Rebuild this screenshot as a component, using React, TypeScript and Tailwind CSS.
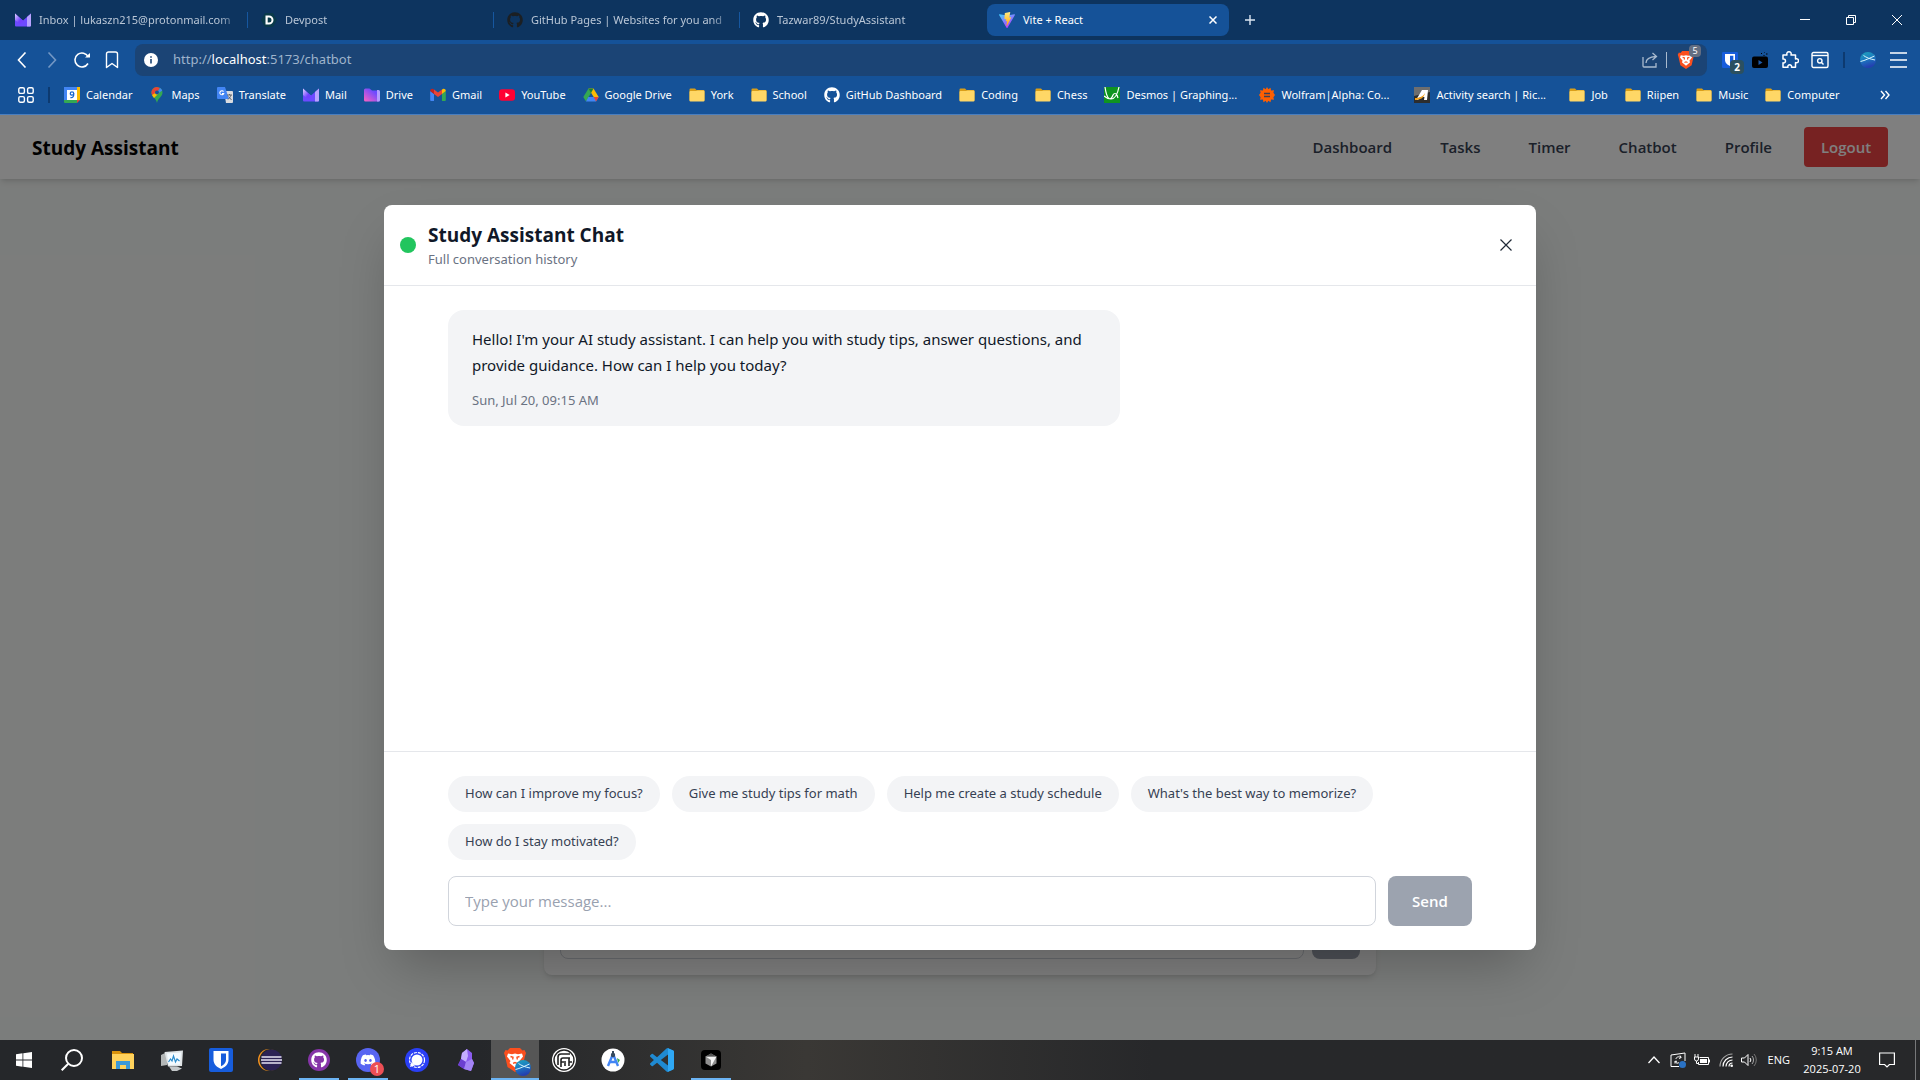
import React, { useState } from 'react';
import { FaGithub, FaDiscord } from 'react-icons/fa';

type IconProps = { className?: string };

/* ---------- icons ---------- */

const ProtonMailIcon: React.FC<IconProps> = ({ className = 'size-4' }) => (
  <svg viewBox="0 0 16 16" className={className}>
    <defs>
      <linearGradient id="pm" x1="0" y1="0" x2="1" y2="1">
        <stop offset="0" stopColor="#e3d9ff" />
        <stop offset="0.6" stopColor="#7341ff" />
      </linearGradient>
    </defs>
    <path d="M0 1.5 8 8.5 16 1.5V13.5a1 1 0 0 1-1 1H1a1 1 0 0 1-1-1Z" fill="#6d4aff" />
    <path d="M0 1.5 6 7 9 9.5 5 12 0 8Z" fill="url(#pm)" />
    <path d="M12 5 16 1.5V13.5a1 1 0 0 1-1 1h-3Z" fill="#b9a3ff" />
  </svg>
);

const DevpostIcon: React.FC<IconProps> = () => (
  <svg viewBox="0 0 16 16" className="size-4">
    <path d="M4 1h8l4 7-4 7H4L0 8Z" fill="#0a3a4a" />
    <path d="M4.500 3.500H8a4.500 4.500 0 0 1 0 9H4.500Zm2.200 2v5H8a2.500 2.500 0 0 0 0-5Z" fill="#fff" />
  </svg>
);

const ViteIcon: React.FC<IconProps> = () => (
  <svg viewBox="0 0 32 32" className="size-4">
    <defs>
      <linearGradient id="va" x1="0" y1="0" x2="0.6" y2="1">
        <stop offset="0" stopColor="#41d1ff" />
        <stop offset="1" stopColor="#bd34fe" />
      </linearGradient>
      <linearGradient id="vb" x1="0" y1="0" x2="0" y2="1">
        <stop offset="0" stopColor="#ffea83" />
        <stop offset="1" stopColor="#ffa800" />
      </linearGradient>
    </defs>
    <path d="m31.8 5.8-15 26a1 1 0 0 1-1.4 0L.2 5.800a1 1 0 0 1 1-1.300L16 7.100l14.800-2.600a1 1 0 0 1 1 1.300Z" fill="url(#va)" />
    <path d="M22 .1 12 2a.5.5 0 0 0-.4.4l-.7 11.600a.5.5 0 0 0 .6.500l3-.700-1 5.200 3-.8-1.600 9c-.1.600.700.900 1 .400L24.500 11a.5.500 0 0 0-.5-.7l-3.300.600L22.500.700A.5.500 0 0 0 22 .1Z" fill="url(#vb)" />
  </svg>
);

const CalendarIcon: React.FC<IconProps> = () => (
  <svg viewBox="0 0 16 16" className="size-4">
    <path d="M0 0h13v3H3v10H0Z" fill="#4285f4" />
    <path d="M13 0h3v13h-3Z" fill="#fbbc04" />
    <path d="M0 13h13v3H1a1 1 0 0 1-1-1Z" fill="#34a853" />
    <path d="M13 13h3l-3 3Z" fill="#ea4335" />
    <path d="M3 3h10v10H3Z" fill="#fff" />
    <circle cx="8" cy="6.500" r="1.700" fill="none" stroke="#1967d2" strokeWidth="1.300" />
    <path d="M9.700 6.500c.2 3-1 4.500-3.300 4" fill="none" stroke="#1967d2" strokeWidth="1.300" />
  </svg>
);

const MapsIcon: React.FC<IconProps> = () => (
  <svg viewBox="0 0 16 16" className="size-4">
    <path d="M8 0a5.500 5.500 0 0 0-5.500 5.500c0 4 4.500 5.500 5.500 10.500 1-5 5.500-6.500 5.500-10.500A5.500 5.500 0 0 0 8 0Z" fill="#34a853" />
    <path d="M8 0a5.500 5.500 0 0 0-4.300 2L8 5.500 11 1Z" fill="#ea4335" />
    <path d="M11 .9 8 5.500l-4.500 5 9.700-7A5.500 5.500 0 0 0 11 .9Z" fill="#4285f4" />
    <path d="M3.700 2a5.500 5.500 0 0 0-.6 6L8 5.500Z" fill="#ea4335" />
    <path d="M3 8c.5 1.200 1.200 2 2 3l5-5-2-1Z" fill="#fbbc04" />
    <circle cx="8" cy="5.500" r="2" fill="#155298" />
  </svg>
);

const TranslateIcon: React.FC<IconProps> = () => (
  <svg viewBox="0 0 16 16" className="size-4">
    <path d="M7 4h8a1 1 0 0 1 1 1v10a1 1 0 0 1-1 1H9Z" fill="#dadce0" />
    <path d="M1 0h7l4 12H1a1 1 0 0 1-1-1V1a1 1 0 0 1 1-1Z" fill="#4285f4" />
    <path d="M6.500 4.600A2 2 0 1 0 6.700 6.500H5" fill="none" stroke="#fff" strokeWidth="1.100" />
    <path d="M10 8h5M12.500 7v1M14 8c-.5 2-2 3.500-3 4.500M11.500 9.500l3 3.500" fill="none" stroke="#5f6368" strokeWidth="1" />
  </svg>
);

const ProtonDriveIcon: React.FC<IconProps> = () => (
  <svg viewBox="0 0 16 16" className="size-4">
    <defs>
      <linearGradient id="pd" x1="1" y1="0" x2="0" y2="1">
        <stop offset="0.3" stopColor="#6d4aff" />
        <stop offset="1" stopColor="#ff62c0" />
      </linearGradient>
    </defs>
    <path d="M0 3a1.500 1.500 0 0 1 1.500-1.500h4L8 3.500h6.500A1.500 1.500 0 0 1 16 5v8a1.500 1.500 0 0 1-1.500 1.500h-13A1.500 1.500 0 0 1 0 13Z" fill="url(#pd)" />
    <path d="M13 3h1.500A1.500 1.500 0 0 1 16 4.500V13a1.500 1.500 0 0 1-1.500 1.500H13Z" fill="#b39dff" />
  </svg>
);

const GmailIcon: React.FC<IconProps> = () => (
  <svg viewBox="0 0 16 16" className="size-4">
    <path d="M1 14h3V7L.2 4v9a1 1 0 0 0 .8 1Z" fill="#4285f4" />
    <path d="M12 14h3a1 1 0 0 0 .8-1V4L12 7Z" fill="#34a853" />
    <path d="M12 2.500V7l3.800-3c0-2-1.800-2.500-2.800-2Z" fill="#fbbc04" />
    <path d="M4 7V2.500l4 3 4-3V7l-4 3Z" fill="#ea4335" />
    <path d="M.2 4 4 7V2.500L3 2C2 1.500.2 2 .2 4Z" fill="#c5221f" />
  </svg>
);

const YouTubeIcon: React.FC<IconProps> = () => (
  <svg viewBox="0 0 16 16" className="size-4">
    <rect y="2.300" width="16" height="11.500" rx="3" fill="#ff0033" />
    <path d="m6.400 5.600 4.200 2.400-4.200 2.400Z" fill="#fff" />
  </svg>
);

const GoogleDriveIcon: React.FC<IconProps> = () => (
  <svg viewBox="0 0 16 16" className="size-4">
    <path d="M5.500 1.500 8 6 3 14.500.3 10Z" fill="#34a853" />
    <path d="M5.500 1.500h5L15.700 10h-5Z" fill="#fbbc04" />
    <path d="M5.500 1.500h5L8 6Z" fill="#188038" />
    <path d="M5.300 10h10.400L13 14.500H3Z" fill="#4285f4" />
    <path d="M10.700 10h5L13 14.500Z" fill="#ea4335" />
  </svg>
);

const FolderIcon: React.FC<IconProps> = () => (
  <svg viewBox="0 0 16 16" className="size-4">
    <path d="M.5 2.500a1 1 0 0 1 1-1H6l1.500 1.500h7a1 1 0 0 1 1 1v9.500H.5Z" fill="#d99e19" />
    <path d="M1.500 4H7l1.500-.5h6a1 1 0 0 1 1 1v9a1 1 0 0 1-1 1h-13a1 1 0 0 1-1-1V5a1 1 0 0 1 1-1Z" fill="#ffd766" />
  </svg>
);

const GithubWhiteIcon: React.FC<IconProps> = () => <FaGithub className="size-4 text-white" />;

const GithubDarkIcon: React.FC<IconProps> = () => <FaGithub className="size-4 text-[#1b1f23]" />;

const DesmosIcon: React.FC<IconProps> = () => (
  <svg viewBox="0 0 16 16" className="size-4">
    <path d="M0 0h16v16H0Z" fill="#0f9420" />
    <path d="M1 0c2 14 6 14 8 8 1-2 3-2 4 0l1 3M15 0c-2 10-5 12-8 12-3 0-5-1-7-3" fill="none" stroke="#fff" strokeWidth="1.200" />
  </svg>
);

const WolframIcon: React.FC<IconProps> = () => (
  <svg viewBox="0 0 16 16" className="size-4">
    <path d="m8 0 1.300 2.200L11.500.7l.6 2.700 2.900-.2-.6 2.600L16 8l-1.600 2.200.6 2.600-2.900-.2-.6 2.700-2.200-1.500L8 16l-1.300-2.200-2.200 1.500-.6-2.700-2.900.2.600-2.600L0 8l1.600-2.200L1 3.200l2.900.2.600-2.700 2.200 1.500Z" fill="#ff5f00" />
    <path d="M5 6.500h6M5 9.500h6" stroke="#3b3f54" strokeWidth="1.400" />
  </svg>
);

const ActivityIcon: React.FC<IconProps> = () => (
  <svg viewBox="0 0 16 16" className="size-4">
    <path d="M0 0h16v16H0Z" fill="#2d2d2d" />
    <path d="M0 0h16v5L0 9Z" fill="#6e6e6e" />
    <path d="M2 13 8 3h6l-1 10h-3l.5-3H6l-2 3Z" fill="#fff" />
    <path d="M1 11c4 0 8-1 10-5-1 5-5 7-10 7Z" fill="#f5a21b" />
  </svg>
);

const BitwardenIcon: React.FC<IconProps> = ({ className = 'size-4' }) => (
  <svg viewBox="0 0 24 24" className={className}>
    <rect width="24" height="24" rx="2" fill="#175ddc" />
    <path d="M4.500 3h15v9c0 4.500-4 7.500-7.500 9-3.500-1.500-7.500-4.500-7.500-9Z" fill="#fff" />
    <path d="M12 5.500h5V12c0 3-2.500 5-5 6.300Z" fill="#175ddc" />
  </svg>
);

const BraveIcon: React.FC<IconProps> = ({ className = 'size-[18px]' }) => (
  <svg viewBox="0 0 24 24" className={className}>
    <path d="M7 0h10l2.500 2.500 2-.5L23 5l-1 3-2.500 11L12 24l-7.500-5L2 8 1 5l1.500-3 2 .5Z" fill="#fb4f1e" />
    <path d="m5 5.500 4 .8 3-.8 3 .8 4-.8 1 3-3.500 4.500 1 2L12 19.500 6.500 15l1-2L4 8.500Z" fill="#fff" />
    <path d="m7.500 8.500 2.500.8-.3 2.200M16.500 8.500l-2.500.8.3 2.200M10 15.300l2-.8 2 .8" fill="none" stroke="#fb4f1e" strokeWidth="1.400" />
  </svg>
);

const GlobeIcon: React.FC<IconProps> = ({ className = 'size-4' }) => (
  <svg viewBox="0 0 16 16" className={className}>
    <defs>
      <linearGradient id="gl" x1="0" y1="0" x2="0.3" y2="1">
        <stop offset="0" stopColor="#1fa5bd" />
        <stop offset="0.5" stopColor="#1c7cc0" />
        <stop offset="1" stopColor="#2340b0" />
      </linearGradient>
    </defs>
    <circle cx="8" cy="8" r="8" fill="url(#gl)" />
    <path d="M.5 9.500C5 8.500 10 6 14.500 4M3.500 3.500c3 2 6 3.500 11.500 4.500" fill="none" stroke="#d5f4ff" strokeWidth="1" />
  </svg>
);

/* ---------- browser chrome ---------- */

interface Tab {
  title: string;
  icon: React.FC<IconProps>;
}

const tabs: Tab[] = [
  { title: 'Inbox | lukaszn215@protonmail.com', icon: ProtonMailIcon },
  { title: 'Devpost', icon: DevpostIcon },
  { title: 'GitHub Pages | Websites for you and', icon: GithubDarkIcon },
  { title: 'Tazwar89/StudyAssistant', icon: GithubWhiteIcon },
];

const TabStrip: React.FC = () => (
  <div className="flex h-10 shrink-0 items-center bg-[#0d345f] pl-[3px] font-['Noto_Sans',sans-serif] text-[11px] text-[#b9c6d6]">
    {tabs.map((tab, i) => (
      <React.Fragment key={tab.title}>
        <button className="flex h-8 w-[242px] items-center gap-2 pl-3 text-left">
          <tab.icon />
          <span className="flex-1 whitespace-nowrap [mask-image:linear-gradient(to_right,black_180px,transparent_202px)]">
            {tab.title}
          </span>
        </button>
        <span className={`ml-0.5 mr-px h-4 w-px ${i < tabs.length - 1 ? 'bg-[#1657a0]' : ''}`} />
      </React.Fragment>
    ))}
    <div className="flex h-8 w-[242px] items-center gap-2 rounded-lg bg-[#155298] pl-3 pr-3 text-white">
      <ViteIcon />
      <span className="flex-1">Vite + React</span>
      <button aria-label="Close tab">
        <svg viewBox="0 0 8 8" className="size-2">
          <path d="m.5.5 7 7m0-7-7 7" stroke="#fff" strokeWidth="1.500" />
        </svg>
      </button>
    </div>
    <button aria-label="New tab" className="ml-4">
      <svg viewBox="0 0 10 10" className="size-2.5">
        <path d="M5 0v10M0 5h10" stroke="#dce6f2" strokeWidth="1.400" />
      </svg>
    </button>
    <div className="ml-auto flex h-full">
      <button aria-label="Minimize" className="flex w-[46px] items-center justify-center">
        <svg viewBox="0 0 10 10" className="size-2.5" stroke="#fff" fill="none">
          <path d="M0 4.500h10" />
        </svg>
      </button>
      <button aria-label="Restore" className="flex w-[46px] items-center justify-center">
        <svg viewBox="0 0 10 10" className="size-2.5" stroke="#fff" fill="none">
          <path d="M.5 2.500h7v7h-7ZM2.500 2.500v-2h7v7h-2" />
        </svg>
      </button>
      <button aria-label="Close" className="flex w-[46px] items-center justify-center">
        <svg viewBox="0 0 10 10" className="size-2.5" stroke="#fff" fill="none">
          <path d="m0 0 10 10M10 0 0 10" />
        </svg>
      </button>
    </div>
  </div>
);

const toolButton = 'flex w-[30px] items-center justify-center';

const Toolbar: React.FC = () => (
  <div className="flex h-10 shrink-0 items-center bg-[#155298] pl-[7px] pr-[7px] font-['Noto_Sans',sans-serif]">
    <button aria-label="Back" className={toolButton}>
      <svg viewBox="0 0 16 16" className="size-4" fill="none" stroke="#fff" strokeWidth="1.600">
        <path d="M11.500.5 4.500 8l7 7.500" />
      </svg>
    </button>
    <button aria-label="Forward" className={toolButton}>
      <svg viewBox="0 0 16 16" className="size-4" fill="none" stroke="#7397c4" strokeWidth="1.600">
        <path d="m4.500.5 7 7.500-7 7.500" />
      </svg>
    </button>
    <button aria-label="Reload" className={toolButton}>
      <svg viewBox="0 0 18 18" className="size-[18px]" fill="none" stroke="#fff" strokeWidth="1.600">
        <path d="M15 12.500A7 7 0 1 1 15.300 6" />
        <path d="M12 6.500h5V2Z" fill="#fff" stroke="none" />
      </svg>
    </button>
    <button aria-label="Bookmark this page" className={toolButton}>
      <svg viewBox="0 0 16 18" className="h-[18px] w-4" fill="none" stroke="#fff" strokeWidth="1.400" strokeLinejoin="round">
        <path d="M2.500 3a2 2 0 0 1 2-2h7a2 2 0 0 1 2 2v13.500L8 12.500l-5.500 4Z" />
      </svg>
    </button>
    <div className="ml-2 flex h-8 flex-1 items-center rounded-lg bg-[#1b4475] pl-[9px]">
      <svg viewBox="0 0 14 14" className="size-3.5">
        <circle cx="7" cy="7" r="7" fill="#fff" />
        <path d="M7 6v4.500M7 3.300v1.400" stroke="#1b4475" strokeWidth="1.600" />
      </svg>
      <label htmlFor="address" className="ml-[15px] flex-1 text-[13px] text-[#9fb4cc]">
        http://<span className="text-white">localhost</span>:5173/chatbot
      </label>
      <input id="address" type="text" className="sr-only" />
      <button aria-label="Share">
        <svg viewBox="0 0 16 16" className="size-4" fill="none" stroke="#a9bace" strokeWidth="1.300">
          <path d="M1 5v9a1 1 0 0 0 1 1h12v-4M4 11c0-4 3-6 10-6.500M10.500 1l4 3.500-4 3.500" />
        </svg>
      </button>
      <span className="ml-2 h-4 w-px bg-[#a9bace]" />
      <button aria-label="Brave Shields" className="relative ml-2.5 mr-3">
        <BraveIcon />
        <span className="absolute -right-1.5 -top-1.5 flex h-3 w-3 items-center justify-center rounded-sm bg-[#636e82] text-[9px] text-white">5</span>
      </button>
    </div>
    <div className="ml-2 flex items-center">
      <button aria-label="Bitwarden" className={toolButton}>
        <span className="relative">
          <BitwardenIcon />
          <span className="absolute -bottom-1.5 -right-1.5 flex h-3.5 w-3.5 items-center justify-center rounded bg-[#2b5060] text-[10px] font-bold text-white">2</span>
        </span>
      </button>
      <button aria-label="Video extension" className={toolButton}>
        <svg viewBox="0 0 16 16" className="size-4">
          <rect y="4.500" width="16" height="11.500" rx="2" fill="#000" />
          <path d="M9 1.500h1M12 0h1M14 2h1.500M11.500 3.500h1" stroke="#000" strokeWidth="1.200" />
          <path d="m6.500 8 4 2.500-4 2.500Z" fill="#1e5aa8" />
        </svg>
      </button>
      <button aria-label="Extensions" className={toolButton}>
        <svg viewBox="0 0 18 18" className="size-[18px]" fill="none" stroke="#fff" strokeWidth="1.500" strokeLinejoin="round">
          <path d="M2 4h4c-.6-2 .4-3.200 2-3.200S10.600 2 10 4h4.500v4c2-.6 3 .4 3 1.800s-1 2.400-3 1.800v4.700h-4c.4-1.600-.6-2.500-1.800-2.500s-2.200.9-1.800 2.500H2v-4.500c1.600.4 2.500-.6 2.500-1.900S3.600 7.600 2 8Z" />
        </svg>
      </button>
      <button aria-label="Search tabs" className={toolButton}>
        <svg viewBox="0 0 18 18" className="size-[18px]" fill="none" stroke="#fff" strokeWidth="1.400">
          <rect x="1" y="1.500" width="16" height="15" rx="1.500" />
          <path d="M1 4.500h16" />
          <circle cx="8.800" cy="9.800" r="2.200" />
          <path d="m10.500 11.500 2 2" />
        </svg>
      </button>
      <span className="mx-2 h-4 w-0.5 bg-[#0d3a70]" />
      <button aria-label="Profile" className={toolButton}>
        <GlobeIcon />
      </button>
      <button aria-label="Menu" className={toolButton}>
        <svg viewBox="0 0 17 16" className="h-4 w-[17px]" stroke="#fff" strokeWidth="1.500">
          <path d="M0 1h17M0 8h17M0 15h17" />
        </svg>
      </button>
    </div>
  </div>
);

const bookmarks: { name: string; icon: React.FC<IconProps>; wide?: boolean }[] = [
  { name: 'Calendar', icon: CalendarIcon },
  { name: 'Maps', icon: MapsIcon },
  { name: 'Translate', icon: TranslateIcon },
  { name: 'Mail', icon: ProtonMailIcon },
  { name: 'Drive', icon: ProtonDriveIcon },
  { name: 'Gmail', icon: GmailIcon },
  { name: 'YouTube', icon: YouTubeIcon },
  { name: 'Google Drive', icon: GoogleDriveIcon },
  { name: 'York', icon: FolderIcon },
  { name: 'School', icon: FolderIcon },
  { name: 'GitHub Dashboard', icon: GithubWhiteIcon },
  { name: 'Coding', icon: FolderIcon },
  { name: 'Chess', icon: FolderIcon },
  { name: 'Desmos | Graphing...', icon: DesmosIcon, wide: true },
  { name: 'Wolfram|Alpha: Co...', icon: WolframIcon, wide: true },
  { name: 'Activity search | Ric...', icon: ActivityIcon, wide: true },
  { name: 'Job', icon: FolderIcon },
  { name: 'Riipen', icon: FolderIcon },
  { name: 'Music', icon: FolderIcon },
  { name: 'Computer', icon: FolderIcon },
];

const BookmarksBar: React.FC = () => (
  <nav className="flex h-[35px] shrink-0 items-center border-b border-[#4a7fc0] bg-[#155298] pb-1 font-['Noto_Sans',sans-serif] text-[11px] text-white">
    <button aria-label="Apps" className="ml-[18px]">
      <svg viewBox="0 0 16 16" className="size-4" fill="none" stroke="#fff" strokeWidth="1.400">
        <rect x=".8" y=".8" width="5.600" height="5.600" rx="1.500" />
        <rect x="9.600" y=".8" width="5.600" height="5.600" rx="1.500" />
        <rect x=".8" y="9.600" width="5.600" height="5.600" rx="1.500" />
        <rect x="9.600" y="9.600" width="5.600" height="5.600" rx="1.500" />
      </svg>
    </button>
    <span className="ml-3.5 mr-3.5 h-4 w-0.5 bg-[#0d3a70]" />
    <div className="flex gap-[17px]">
      {bookmarks.map((b) => (
        <a key={b.name} href="#" className={`flex items-center gap-1.5 whitespace-nowrap ${b.wide ? 'w-[138px]' : ''}`}>
          <b.icon />
          {b.name}
        </a>
      ))}
    </div>
    <button aria-label="More bookmarks" className="ml-auto mr-[30px]">
      <svg viewBox="0 0 10 10" className="size-2.5" fill="none" stroke="#fff" strokeWidth="1.400">
        <path d="m1 1 3.500 4L1 9M5.500 1 9 5 5.500 9" />
      </svg>
    </button>
  </nav>
);

/* ---------- page ---------- */

const navLinks = ['Dashboard', 'Tasks', 'Timer', 'Chatbot', 'Profile'];

const Navbar: React.FC = () => (
  <header className="flex h-16 shrink-0 items-center justify-between bg-white px-8 shadow-md">
    <h1 className="pt-0.5 text-[19px] font-bold text-black">Study Assistant</h1>
    <nav className="flex items-center gap-4 text-[15px] font-semibold text-gray-700">
      {navLinks.map((link) => (
        <a key={link} href="#" className="px-4 py-2">
          {link}
        </a>
      ))}
      <button className="h-10 w-[84px] rounded bg-[#ef4444] text-white">Logout</button>
    </nav>
  </header>
);

const suggestions = [
  'How can I improve my focus?',
  'Give me study tips for math',
  'Help me create a study schedule',
  "What's the best way to memorize?",
  'How do I stay motivated?',
];

const ChatModal: React.FC = () => {
  const [message, setMessage] = useState('');

  return (
    <div role="dialog" aria-label="Study Assistant Chat" className="flex h-[calc(100%-180px)] w-3/5 flex-col rounded-lg bg-white shadow-2xl">
      <div className="flex items-center gap-3 border-b border-gray-200 p-4">
        <span className="size-4 rounded-full bg-[#22c55e]" />
        <div className="flex-1">
          <h2 className="text-[19px] leading-7 font-bold text-gray-900">Study Assistant Chat</h2>
          <p className="font-['Noto_Sans',sans-serif] text-[13px] leading-5 text-gray-500">Full conversation history</p>
        </div>
        <button aria-label="Close chat" className="p-2">
          <svg viewBox="0 0 12 12" className="size-3" stroke="#1f2937" strokeWidth="1.200">
            <path d="m.5.5 11 11m0-11-11 11" />
          </svg>
        </button>
      </div>
      <div className="flex-1 px-16 py-6 font-['Noto_Sans',sans-serif]">
        <div className="max-w-2xl rounded-2xl bg-gray-100 px-6 py-4">
          <p className="text-[15px] leading-[26px] text-gray-900">
            Hello! I'm your AI study assistant. I can help you with study tips, answer questions, and provide guidance. How can I help you today?
          </p>
          <p className="mt-3 text-[13px] leading-5 text-gray-500">Sun, Jul 20, 09:15 AM</p>
        </div>
      </div>
      <div className="border-t border-gray-200 px-16 py-6">
        <div className="mb-4 flex flex-wrap gap-3 font-['Noto_Sans',sans-serif]">
          {suggestions.map((s) => (
            <button key={s} className="h-9 rounded-full bg-gray-100 px-[17px] text-[13px] text-gray-700" onClick={() => setMessage(s)}>
              {s}
            </button>
          ))}
        </div>
        <form className="flex gap-3" onSubmit={(e) => e.preventDefault()}>
          <input
            type="text"
            aria-label="Message"
            placeholder="Type your message..."
            value={message}
            onChange={(e) => setMessage(e.target.value)}
            className="h-[50px] min-w-0 flex-1 rounded-lg border border-gray-300 px-4 text-[15px] placeholder:text-gray-400"
          />
          <button className="w-[84px] rounded-lg bg-[#9ca3af] text-[15px] font-semibold text-white">Send</button>
        </form>
      </div>
    </div>
  );
};

const Page: React.FC = () => (
  <div className="relative flex flex-1 flex-col bg-[#f7faf8]">
    <Navbar />
    <main className="flex flex-1 flex-col px-8 pt-10 pb-[65px]">
      <div className="mx-auto flex w-full max-w-[832px] flex-1 items-end gap-2 rounded-lg bg-white p-4 shadow-md">
        <input type="text" aria-label="Quick message" className="h-10 min-w-0 flex-1 rounded-lg border border-gray-300" />
        <button aria-label="Send quick message" className="h-10 w-12 rounded-lg bg-[#9ca3af]" />
      </div>
    </main>
    <div className="absolute inset-0 flex items-center justify-center bg-black/50">
      <ChatModal />
    </div>
  </div>
);

/* ---------- taskbar ---------- */

const ExplorerIcon = () => (
  <svg viewBox="0 0 24 24" className="size-6">
    <path d="M1 3h8l2 2h11v4H1Z" fill="#d9930d" />
    <path d="M1 6h22v15H1Z" fill="#ffd25c" />
    <path d="M5 13h14v8h-4v-4H9v4H5Z" fill="#3c9ad9" />
  </svg>
);

const MonitorIcon = () => (
  <svg viewBox="0 0 24 24" className="size-6">
    <path d="M1 7 7 4v13l-6 1Z" fill="#b4b8b8" />
    <path d="m4.500 4 18.500-1.500-1 15.500-14 .5Z" fill="#dfe4e6" />
    <path d="m7 5.500 14-1-1 12-11.500.5Z" fill="#f4fbff" />
    <path d="m8.500 14 2-3 1.500 2 1.500-5 2 6 1.500-3 2.500 2" fill="none" stroke="#2b8ccc" strokeWidth="1.200" />
    <path d="M9 18.500h8l5 2-5 2.500h-5Z" fill="#c3c7c9" />
  </svg>
);

const TaskBitwardenIcon = () => <BitwardenIcon className="size-6" />;

const EclipseIcon = () => (
  <svg viewBox="0 0 24 24" className="size-6">
    <circle cx="11" cy="12" r="11" fill="#f7941e" />
    <circle cx="12.500" cy="12" r="11" fill="#26282b" />
    <circle cx="13.500" cy="12" r="10.500" fill="#2c2255" />
    <path d="M3.500 9h20M3 12h21M3.500 15h20" stroke="#e6e3f2" strokeWidth="1.500" />
  </svg>
);

const GithubDesktopIcon = () => (
  <span className="flex size-[22px] items-center justify-center rounded-full bg-[#8534a8]">
    <FaGithub className="size-4 text-white" />
  </span>
);

const DiscordIcon = () => (
  <span className="relative flex size-6 items-center justify-center rounded-full bg-[#5865f2]">
    <FaDiscord className="size-4 text-white" />
    <span className="absolute -bottom-1 -right-1 flex size-3.5 items-center justify-center rounded-full bg-[#ed4f55] text-[11px] text-white">1</span>
  </span>
);

const SignalIcon = () => (
  <svg viewBox="0 0 24 24" className="size-6">
    <circle cx="12" cy="12" r="12" fill="#2a3ff5" />
    <circle cx="12" cy="12" r="7.500" fill="none" stroke="#fff" strokeWidth="1.200" strokeDasharray="3 1" />
    <circle cx="12" cy="12" r="5.500" fill="#fff" />
    <path d="m5 19 1.500-5 3.500 3.500Z" fill="#fff" />
  </svg>
);

const ObsidianIcon = () => (
  <svg viewBox="0 0 24 24" className="size-6">
    <path d="M13 1 8 5l-1 6-3 6 6 4 7 2 3-8-2-4V5Z" fill="#8b5cf0" />
    <path d="M13 1 8 5l-1 6 5 3 2-6Z" fill="#c4adff" />
    <path d="m4 17 6 4 2-7-5-3Z" fill="#6c3fd1" />
    <path d="m12 14 6-3 2 4-3 8-7-2Z" fill="#a484f5" />
  </svg>
);

const BraveTaskIcon = () => (
  <span className="relative">
    <BraveIcon className="size-6" />
    <GlobeIcon className="absolute -bottom-1 -right-1 size-4" />
  </span>
);

const FtcIcon = () => (
  <svg viewBox="0 0 24 24" className="size-6" fill="none">
    <circle cx="12" cy="12" r="12" fill="#fff" />
    <circle cx="12" cy="12" r="10" stroke="#222" strokeWidth="1.400" />
    <path d="M6 17V9a3 3 0 0 1 3-3h9M9 19v-7a2 2 0 0 1 2-2h7M9 14h5M13 18v-3M17 10v8M17 14h3" stroke="#222" strokeWidth="1.600" />
  </svg>
);

const AndroidStudioIcon = () => (
  <svg viewBox="0 0 24 24" className="size-6">
    <circle cx="12" cy="12" r="11.500" fill="#fff" />
    <path d="m12 6-5 12M12 6l5 12M8 14h8" fill="none" stroke="#4285f4" strokeWidth="2.400" />
    <circle cx="12" cy="7" r="2.200" fill="#35495e" />
    <path d="M12 3v4" stroke="#35495e" strokeWidth="2" />
    <path d="m16 10 3 2-2 3Z" fill="#34a853" />
  </svg>
);

const VsCodeIcon = () => (
  <svg viewBox="0 0 24 24" className="size-6">
    <path
      fill="#1f8ad2"
      d="M23.150 2.587L18.210.210a1.494 1.494 0 0 0-1.705.290l-9.460 8.630-4.120-3.128a.999.999 0 0 0-1.276.057L.327 7.261A1 1 0 0 0 .326 8.740L3.899 12 .326 15.260a1 1 0 0 0 .001 1.479L1.650 17.940a.999.999 0 0 0 1.276.057l4.120-3.128 9.460 8.630a1.492 1.492 0 0 0 1.704.290l4.942-2.377A1.500 1.500 0 0 0 24 20.060V3.939a1.500 1.500 0 0 0-.850-1.352zm-5.146 14.861L10.826 12l7.178-5.448v10.896z"
    />
    <path fill="#2fa8f5" d="M18 .200 23.200 2.600A1.500 1.500 0 0 1 24 3.900v16.200a1.500 1.500 0 0 1-.8 1.300L18 23.800Z" />
  </svg>
);

const CursorIcon = () => (
  <svg viewBox="0 0 20 20" className="size-5">
    <rect width="20" height="20" rx="4" fill="#000" />
    <path d="m10 3.500 5.500 3v7L10 16.500l-5.500-3v-7Z" fill="#8f8f8f" />
    <path d="M4.500 6.500h11L10 16.500V10Z" fill="#f4f4f4" />
    <path d="m10 3.500 5.500 3h-11Z" fill="#555" />
  </svg>
);

const apps: { name: string; icon: React.FC; state?: 'open' | 'active' }[] = [
  { name: 'File Explorer', icon: ExplorerIcon },
  { name: 'Performance Monitor', icon: MonitorIcon },
  { name: 'Bitwarden', icon: TaskBitwardenIcon },
  { name: 'Eclipse', icon: EclipseIcon },
  { name: 'GitHub Desktop', icon: GithubDesktopIcon, state: 'open' },
  { name: 'Discord', icon: DiscordIcon, state: 'open' },
  { name: 'Signal', icon: SignalIcon },
  { name: 'Obsidian', icon: ObsidianIcon },
  { name: 'Brave', icon: BraveTaskIcon, state: 'active' },
  { name: 'FTC', icon: FtcIcon },
  { name: 'Android Studio', icon: AndroidStudioIcon },
  { name: 'VS Code', icon: VsCodeIcon },
  { name: 'Cursor', icon: CursorIcon, state: 'open' },
];

const Taskbar: React.FC = () => (
  <footer className="flex h-10 shrink-0 items-stretch bg-linear-to-r from-[#25272a] from-25% via-[#3a3835] via-42% to-[#27282a] to-60% text-white">
    <button aria-label="Start" className="flex w-12 items-center justify-center">
      <svg viewBox="0 0 16 16" className="size-4" fill="#fff">
        <path d="M0 2.200 6.500 1.300V7.600H0ZM7.300 1.200 16 0v7.600H7.300ZM0 8.400h6.500v6.300L0 13.800ZM7.300 8.400H16V16l-8.700-1.200Z" />
      </svg>
    </button>
    <button aria-label="Search" className="mr-[3px] flex w-12 items-center justify-center">
      <svg viewBox="0 0 22 22" className="size-[22px]" fill="none" stroke="#fff" strokeWidth="2">
        <circle cx="13" cy="9" r="8" />
        <path d="M7 15 .7 21.300" />
      </svg>
    </button>
    <div className="flex gap-px">
      {apps.map((app) => (
        <button
          key={app.name}
          aria-label={app.name}
          className={`flex w-12 flex-col items-center ${app.state === 'active' ? 'bg-[#565656]' : ''}`}
        >
          <span className="flex flex-1 items-center pt-0.5">
            <app.icon />
          </span>
          <span className={`h-0.5 ${app.state === 'active' ? 'w-12 bg-[#6cb4f4]' : app.state === 'open' ? 'w-10 bg-[#6cb4f4]' : 'w-10'}`} />
        </button>
      ))}
    </div>
    <div className="ml-auto flex items-center">
      <button aria-label="Show hidden icons" className="flex w-6 justify-center">
        <svg viewBox="0 0 12 8" className="h-2 w-3" fill="none" stroke="#fff" strokeWidth="1.300">
          <path d="m.5 7 5.500-6 5.500 6" />
        </svg>
      </button>
      <button aria-label="Updates" className="flex w-6 justify-center">
        <svg viewBox="0 0 16 16" className="size-4" fill="none" stroke="#fff">
          <path d="M9 14.500H1V3l14-2v8" />
          <path d="M11 5.500C9 4 6 5 6 7m4-3.500 1.200 2-2.200 1M5 9.500c1 2 3 2 4 1M5 11.500v-2.200h2" />
          <circle cx="12.500" cy="12.500" r="3.500" fill="#2a72c4" stroke="none" />
        </svg>
      </button>
      <button aria-label="Battery" className="flex w-6 justify-center">
        <svg viewBox="0 0 16 12" className="h-3 w-4" fill="none" stroke="#fff">
          <path d="M5.500 3.500h9v7H4.500V8M1 0v3M4 0v3M.5 3h4v2a2 2 0 0 1-4 0ZM2.500 7v2.500h2M15.500 5.500v3" />
          <path d="M6 5h7v4H6Z" fill="#fff" stroke="none" />
        </svg>
      </button>
      <button aria-label="Network" className="flex w-6 justify-center">
        <svg viewBox="0 0 14 14" className="size-3.5" fill="none" stroke="#fff" strokeWidth="1.200">
          <path d="M10 13.500a3.500 3.500 0 0 1 3.500-3.500M7 13.500A6.500 6.500 0 0 1 13.500 7M4 13.500A9.500 9.500 0 0 1 13.500 4" />
          <path d="M1 13.500A12.500 12.500 0 0 1 13.500 1" stroke="#a5a5a5" />
          <circle cx="12.700" cy="12.700" r="1.300" fill="#fff" stroke="none" />
        </svg>
      </button>
      <button aria-label="Volume" className="flex w-6 justify-center">
        <svg viewBox="0 0 17 14" className="h-3.5 w-[17px]" fill="none" stroke="#fff">
          <path d="M.5 5h3l3.500-3.500v11L3.500 9h-3ZM9 5a3 3 0 0 1 0 4" />
          <path d="M11 3a6 6 0 0 1 0 8" stroke="#aaa" />
          <path d="M13 1a9 9 0 0 1 0 12" stroke="#777" />
        </svg>
      </button>
      <span className="ml-1.5 text-[11px]">ENG</span>
      <time className="ml-3 w-[60px] text-center text-[11px] leading-[18px]">
        9:15 AM
        <br />
        2025-07-20
      </time>
      <button aria-label="Notifications" className="mx-[17px]">
        <svg viewBox="0 0 16 16" className="size-4" fill="none" stroke="#fff" strokeWidth="1.200">
          <path d="M.6 1h14.800v11.500h-5L8 15l-2.400-2.500h-5Z" />
        </svg>
      </button>
      <span className="ml-[3px] mr-1 h-10 w-px bg-[#77787a]" />
    </div>
  </footer>
);

const App: React.FC = () => (
  <div className="flex h-screen flex-col overflow-hidden font-['Open_Sans','Noto_Sans',sans-serif]">
    <TabStrip />
    <Toolbar />
    <BookmarksBar />
    <Page />
    <Taskbar />
  </div>
);

export default App;
